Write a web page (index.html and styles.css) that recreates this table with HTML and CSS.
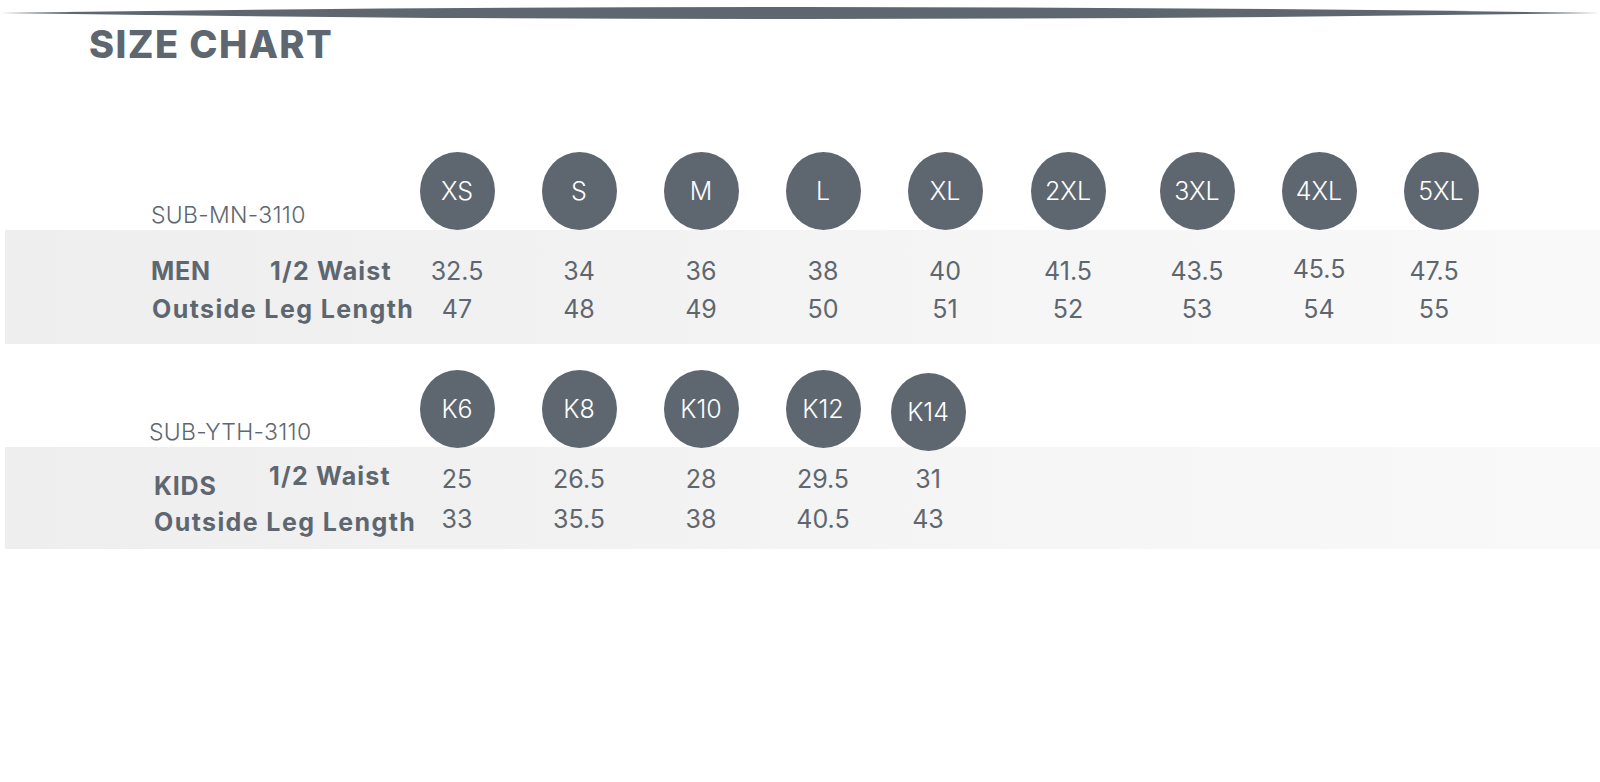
FILE: index.html
```html
<!DOCTYPE html>
<html lang="en">
<head>
<meta charset="utf-8">
<title>Size Chart</title>
<link rel="stylesheet" href="styles.css">
</head>
<body>
<div class="page">
  <svg class="topline" width="1600" height="21" viewBox="0 0 1600 21" aria-hidden="true">
    <path d="M0 13 Q800 1 1600 13 Q800 25 0 13 Z" fill="#5e6770"/>
  </svg>
  <h1 class="title">SIZE CHART</h1>

  <section class="chart chart-men">
    <div class="sizes-row">
      <div class="code">SUB-MN-3110</div>
      <div class="size">XS</div>
      <div class="size">S</div>
      <div class="size">M</div>
      <div class="size">L</div>
      <div class="size">XL</div>
      <div class="size">2XL</div>
      <div class="size">3XL</div>
      <div class="size">4XL</div>
      <div class="size">5XL</div>
    </div>
    <div class="band">
      <div class="row">
        <div class="group">MEN</div>
        <div class="measure">1/2 Waist</div>
        <div class="val">32.5</div>
        <div class="val">34</div>
        <div class="val">36</div>
        <div class="val">38</div>
        <div class="val">40</div>
        <div class="val">41.5</div>
        <div class="val">43.5</div>
        <div class="val val-up">45.5</div>
        <div class="val val-left">47.5</div>
      </div>
      <div class="row">
        <div class="measure-long">Outside Leg Length</div>
        <div class="val">47</div>
        <div class="val">48</div>
        <div class="val">49</div>
        <div class="val">50</div>
        <div class="val">51</div>
        <div class="val">52</div>
        <div class="val">53</div>
        <div class="val">54</div>
        <div class="val val-left">55</div>
      </div>
    </div>
  </section>

  <section class="chart chart-kids">
    <div class="sizes-row">
      <div class="code">SUB-YTH-3110</div>
      <div class="size">K6</div>
      <div class="size">K8</div>
      <div class="size">K10</div>
      <div class="size">K12</div>
      <div class="size size-low">K14</div>
    </div>
    <div class="band">
      <div class="row">
        <div class="group">KIDS</div>
        <div class="measure">1/2 Waist</div>
        <div class="val">25</div>
        <div class="val">26.5</div>
        <div class="val">28</div>
        <div class="val">29.5</div>
        <div class="val">31</div>
      </div>
      <div class="row">
        <div class="measure-long">Outside Leg Length</div>
        <div class="val">33</div>
        <div class="val">35.5</div>
        <div class="val">38</div>
        <div class="val">40.5</div>
        <div class="val">43</div>
      </div>
    </div>
  </section>
</div>
</body>
</html>
```
FILE: styles.css
```css
* { box-sizing: border-box; }

html, body {
  margin: 0;
  padding: 0;
  background: #ffffff;
}

body {
  font-family: Inter, "Noto Sans", "Liberation Sans", sans-serif;
  color: #5e6770;
}

.page {
  width: 1600px;
  height: 782px;
  overflow: hidden;
}

.topline {
  display: block;
}

.title {
  margin: 0 0 0 89px;
  font-size: 38px;
  line-height: 46px;
  font-weight: 800;
  letter-spacing: 1.4px;
  color: #5e6770;
}

/* ---------- chart blocks ---------- */
.chart {
  margin-left: 5px;
  display: flex;
  flex-direction: column;
}

.chart-men {
  margin-top: 85px;
  --cols: 146px 119px 126px 122px 122px 122px 122px 122px 124px 134px 110px 134px;
  --head: 78px;
}

.chart-kids {
  margin-top: 23px;
  --cols: 146px 119px 126px 122px 122px 122px 122px 88px;
  --head: 80px;
}

.sizes-row,
.row {
  display: grid;
  grid-template-columns: var(--cols);
}

.sizes-row {
  height: var(--head);
  align-items: center;
}

.row {
  grid-auto-rows: 38px;
  height: 38px;
}

.code {
  grid-column: 2 / span 2;
  align-self: end;
  font-size: 23px;
  line-height: 30px;
  font-weight: 300;
  letter-spacing: 0.3px;
  color: #5e6770;
}

.chart-kids .code {
  margin-left: -2px;
  margin-bottom: 4px;
}

.size {
  justify-self: center;
  width: 75px;
  height: 78px;
  border-radius: 50%;
  background: #5e6770;
  color: #ffffff;
  display: flex;
  align-items: center;
  justify-content: center;
  font-size: 25px;
  font-weight: 300;
  position: relative;
  z-index: 1;
}

.chart-kids .size-low {
  margin-top: 6px;
}

.band {
  display: flex;
  flex-direction: column;
  background: linear-gradient(90deg, #eeeeee 0%, #f1f1f1 30%, #f5f5f5 60%, #f9f9f9 100%);
}

.chart-men .band {
  padding: 22px 0 16px;
}

.chart-kids .band {
  padding: 13px 0 11px;
  gap: 2px;
}

.row > div {
  line-height: 38px;
  height: 38px;
  font-size: 25px;
  white-space: nowrap;
}

.group {
  grid-column: 2;
  font-weight: 700;
  letter-spacing: 0.8px;
}

.measure {
  font-weight: 700;
  letter-spacing: 1.2px;
}

.measure-long {
  grid-column: 2 / span 2;
  font-weight: 700;
  margin-left: 1px;
  letter-spacing: 1.4px;
}

.val {
  text-align: center;
  font-weight: 400;
}

.val-up {
  align-self: start;
  margin-top: -2px;
}

.val-left {
  margin-right: 14px;
}

.chart-kids .group {
  align-self: start;
  margin-top: 7px;
  margin-left: 3px;
}

.chart-kids .measure {
  align-self: start;
  margin-top: -3px;
  margin-left: -1px;
}

.chart-kids .measure-long {
  align-self: start;
  margin-top: 3px;
  margin-left: 3px;
}
```
